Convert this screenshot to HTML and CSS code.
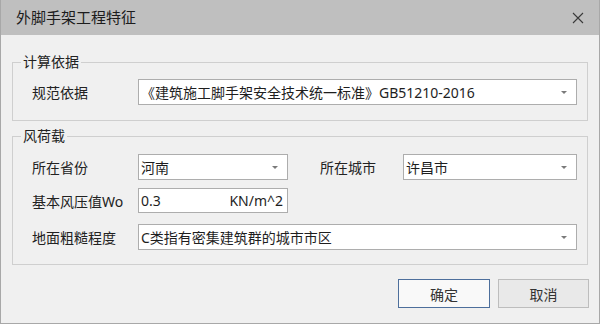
FILE: index.html
```html
<!DOCTYPE html>
<html lang="zh-CN">
<head>
<meta charset="utf-8">
<title>外脚手架工程特征</title>
<link rel="stylesheet" href="styles.css">
</head>
<body>
<div class="dialog">
  <div class="titlebar">
    <span class="title">外脚手架工程特征</span>
    <svg class="close" width="12" height="12" viewBox="0 0 12 12"><path d="M1 1 L11 11 M11 1 L1 11" stroke="#3a3a3a" stroke-width="1.1" fill="none"/></svg>
  </div>
  <div class="body">
    <fieldset class="group g1">
      <legend>计算依据</legend>
      <div class="inner inner1">
        <div class="row">
          <span class="lbl">规范依据</span>
          <div class="combo wide"><span>《建筑施工脚手架安全技术统一标准》GB51210-2016</span><i class="arrow"></i></div>
        </div>
      </div>
    </fieldset>
    <fieldset class="group g2">
      <legend>风荷载</legend>
      <div class="inner inner2">
        <div class="row">
          <span class="lbl">所在省份</span>
          <div class="combo short"><span>河南</span><i class="arrow"></i></div>
          <span class="lbl lbl2">所在城市</span>
          <div class="combo city"><span>许昌市</span><i class="arrow"></i></div>
        </div>
        <div class="row">
          <span class="lbl">基本风压值Wo</span>
          <div class="input short"><span>0.3</span><span class="unit">KN/m^2</span></div>
        </div>
        <div class="row">
          <span class="lbl">地面粗糙程度</span>
          <div class="combo wide"><span>C类指有密集建筑群的城市市区</span><i class="arrow"></i></div>
        </div>
      </div>
    </fieldset>
    <div class="buttons">
      <button class="btn ok">确定</button>
      <button class="btn cancel">取消</button>
    </div>
  </div>
</div>
</body>
</html>
```
FILE: styles.css
```css
html, body {
  margin: 0;
  padding: 0;
}
body {
  width: 600px;
  height: 324px;
  font-family: "Noto Sans", "Noto Sans CJK SC", sans-serif;
  color: #222;
}
.dialog {
  box-sizing: border-box;
  width: 600px;
  height: 324px;
  border: 1px solid #a8a8a8;
  border-top: none;
  background: #f0f0f0;
  display: flex;
  flex-direction: column;
}
.titlebar {
  height: 35px;
  background: #bfbfbf;
  display: flex;
  align-items: center;
  justify-content: space-between;
  padding: 0 15px 0 15px;
  flex-shrink: 0;
}
.title {
  font-size: 15px;
  color: #1c1c1c;
  line-height: 15px;
}
.close {
  display: block;
}
.body {
  padding: 0 10px 0 11px;
  display: flex;
  flex-direction: column;
}
.group {
  margin: 0;
  padding: 0;
  border: 1px solid #cfcfcf;
  min-width: 0;
  width: 576px;
  box-sizing: border-box;
}
.group legend {
  font-size: 14px;
  line-height: 14px;
  padding: 0 2px;
  margin-left: 8px;
  color: #222;
}
.g1 { margin-top: 20px; }
.g2 { margin-top: 8px; }
.inner {
  padding-left: 19px;
  padding-right: 9px;
  display: flex;
  flex-direction: column;
}
.inner1 {
  padding-top: 10px;
  padding-bottom: 15px;
}
.inner2 {
  padding-top: 11px;
  padding-bottom: 14px;
  gap: 8px;
}
.inner2 .row:last-child { margin-top: 3px; }
.row {
  display: flex;
  align-items: center;
}
.lbl {
  width: 106px;
  font-size: 14px;
  color: #222;
  flex-shrink: 0;
}
.lbl2 {
  margin-left: 32px;
  width: 83px;
}
.combo, .input {
  box-sizing: border-box;
  height: 26px;
  background: #fff;
  border: 1px solid #adadad;
  display: flex;
  align-items: center;
  justify-content: space-between;
  padding: 0 9px 0 2px;
  font-size: 14px;
  color: #1e1e1e;
  white-space: nowrap;
}
.input {
  height: 25px;
  padding-right: 4px;
}
.wide { width: 439px; }
.short { width: 150px; }
.city { width: 174px; }
.arrow {
  width: 0;
  height: 0;
  border-left: 3px solid transparent;
  border-right: 3px solid transparent;
  border-top: 3px solid #7a7a7a;
}
.buttons {
  margin-top: 14px;
  display: flex;
  justify-content: flex-end;
  gap: 8px;
  padding-right: 0;
}
.btn {
  height: 29px;
  font-family: "Noto Sans", "Noto Sans CJK SC", sans-serif;
  font-size: 14px;
  color: #333;
  padding: 0;
  margin: 0;
}
.ok {
  width: 92px;
  background: #f9f9f9;
  border: 1px solid #4d6f9c;
}
.cancel {
  width: 91px;
  background: #e9e9e9;
  border: 1px solid #bdbdbd;
}
```
